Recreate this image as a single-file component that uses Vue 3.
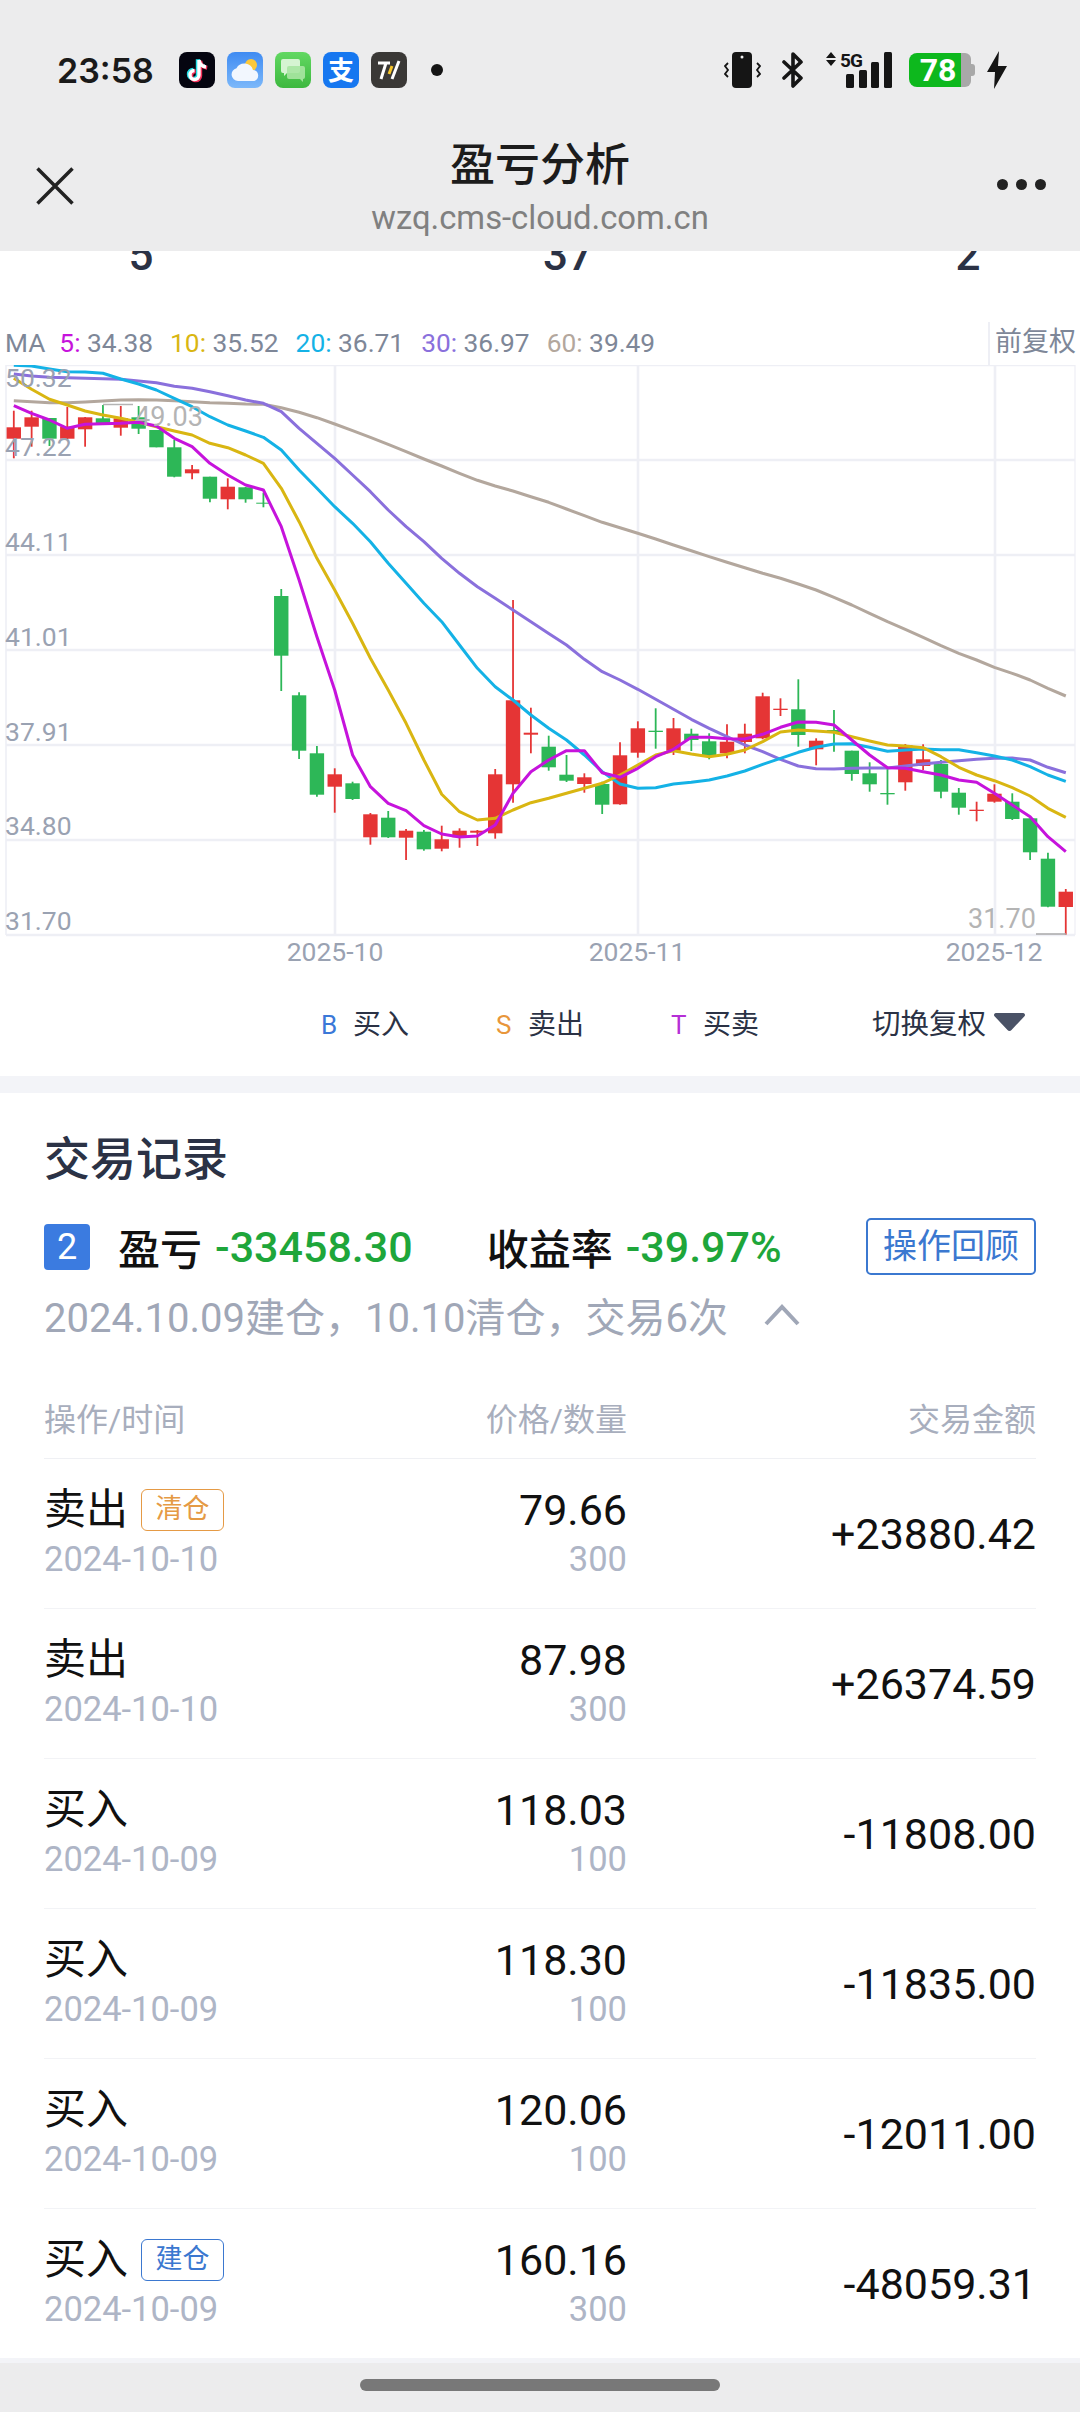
<script setup>
// candle: [colour, wick top, body top, body bottom, wick bottom], y in chart pixels
const R = '#e53535'
const G = '#2db757'
const candles = [
  [R,410.7,427.3,438.7,458.3],[R,410.7,417.3,426.7,446.7],[G,418,418,438.7,446],[R,407,426.7,438.7,439],
  [R,417,417.3,429.3,446.7],[G,405,418.3,425,425],[R,406,418.3,427.7,435.7],[G,406,417.3,428.7,434],
  [G,430,430,447.3,447.3],[G,440,447.3,476.7,477.3],[R,465,469.3,473.3,479.3],[G,476.7,476.7,498.7,502.3],
  [R,478.3,486.7,499.3,509.3],[G,487,487.3,499.3,502.7],[G,492.7,502.7,503.7,507.3],[G,589,596,655.7,691],
  [G,692.3,695.3,750.7,759],[G,746,753.3,794.7,796.7],[R,768.3,774.3,786.7,812.7],[G,781.7,783.3,799,800],
  [R,813,814.3,837.3,844.7],[G,811,817.7,837.3,838],[R,829,830.7,837.7,860],[G,830,831.7,849.3,850.7],
  [R,825.7,839.3,848.7,851.3],[R,828.3,830.7,837.3,847.7],[R,830,830.7,832.7,846],[R,769,774.3,833.3,838.7],
  [R,600,700.3,784.3,802.7],[R,707.7,732.7,734.7,753.3],[G,735.7,746.7,767.3,770.7],[G,755,774.7,780.7,782],
  [R,773.3,777.3,784,792.7],[G,781.7,784,804.7,814],[R,742.3,755.3,804.3,804.7],[R,721.3,728.3,752.7,757.7],
  [G,708.3,730.7,732,748.7],[R,718,728.3,750.7,755],[G,728.7,733.7,740,751],[G,733.3,741.3,756.7,759.3],
  [R,724.3,741.7,753.3,758.3],[R,723.7,733.7,742,753.3],[R,692.7,696.3,738.3,739.3],[R,698.3,708.7,710,716],
  [G,679.3,709.3,735,746.7],[R,738.3,740.7,749.3,765.3],[G,710,730,732,751.7],[G,750.7,750.7,774,780.7],
  [G,762.3,773.3,784.3,791.7],[G,768.3,793,794.3,804.7],[R,744,745.3,782.3,790.7],[R,744.3,759.3,766,770],
  [G,760,764,791.7,798.3],[G,788,792.7,807.7,814.7],[R,801.7,809.7,811,821.3],[R,784.3,793.7,801.7,802.7],
  [G,793.3,801.7,819,820],[G,818.3,818.3,852.3,860],[G,852.7,858.7,906.7,907.3],[R,889,891.7,907,934.7]
]

const ma5 = [405.7,413.3,420,428.3,424.3,423.7,423.3,422.3,426,438.3,446.7,463.3,475,485,490,526.7,580,636.7,690,755,786.7,803.3,810.7,825.7,834,837,836,825,793.3,771.7,760,750.7,750.7,772.7,777.3,768.3,756.7,749.3,737.3,737.3,738.7,739,734.3,727.3,722,722.3,725,740,755,767.7,768.3,771.7,775,780,782.3,793.3,805,816.7,836.7,851.7]
const ma10 = [378.3,389.3,399.3,405,411,415,418.3,422.3,426.7,431,435,443.3,447.7,455,463.3,488.3,521.7,558.3,590,623.3,658.3,690,723.3,760,794.3,811.7,820,818.3,810,802.7,798.3,793.3,788.3,783.3,775,765,755,750.7,754,756.7,754.3,750,741.7,732,730,731,732.3,736.7,741,745,746,747.7,756.7,767.3,775,780.7,787.7,796,808.3,817.3]
const ma20 = [365.3,366,369,371.7,372,373.3,379,384,390,398.3,406.7,416.7,425,431,437.3,450,470,488.3,506.7,523.3,541.7,563.3,583.3,603.3,621.7,645,668.3,686.7,700,715,728.3,740,755,771.7,784,788.3,787.7,784,782.3,780,776,771,764.3,758.3,752.3,747.3,744,743.7,747.3,751.3,750,749,749.7,749.7,752.7,756,760,766.7,775,781.3]
const ma30 = [374,376,377.3,377.7,378.3,378.7,379.3,381,382.7,386.3,388.3,391.7,395.7,400,403.3,411.7,428.3,443.3,458.3,475,491.7,510,526.7,541.7,558.3,573.3,586.7,598.3,610,621.7,633.5,645,659.3,671.7,680,689.3,699.3,709.3,719.3,728.3,736.7,745,751.7,759.3,766,768.7,769,768.3,768,768,766,764,762.3,760.7,759.3,758.3,758,760,767.3,772.7]
const ma60 = [400.7,401.7,402.7,402.7,402,401,400,399.7,400,400.7,401.7,402.7,403.3,404,404.3,407.7,412.3,417.7,424,430.7,437.3,444.3,451.7,459,466,473.3,480.3,486,491,496.7,502.3,509,515.7,522.3,527.7,533.3,539,545,550.7,556.7,562.3,567.7,573.3,578.3,584,590,597.3,605,613.3,621.7,629.3,637.3,645.7,653.3,660,667.3,673.3,680,688.3,696]

const xAt = (i) => 13.8 + 17.83 * i
const toPoints = (ys) => ys.map((y, i) => `${xAt(i).toFixed(1)},${y}`).join(' ')

const maLines = [
  { color: '#b3a79d', points: toPoints(ma60) },
  { color: '#8a70dc', points: toPoints(ma30) },
  { color: '#14b2e6', points: toPoints(ma20) },
  { color: '#d9b612', points: toPoints(ma10) },
  { color: '#c613dc', points: toPoints(ma5) }
]

const maLegend = [
  { label: '5:', value: '34.38', color: '#c613dc' },
  { label: '10:', value: '35.52', color: '#d9b612' },
  { label: '20:', value: '36.71', color: '#14b2e6' },
  { label: '30:', value: '36.97', color: '#8a70dc' },
  { label: '60:', value: '39.49', color: '#b3a79d' }
]

const gridY = [365, 460, 555, 650, 745, 840, 935]
const gridX = [335, 638, 995]
const priceLabels = [
  { text: '50.32', y: 387 }, { text: '47.22', y: 456 }, { text: '44.11', y: 551 }, { text: '41.01', y: 646 },
  { text: '37.91', y: 741 }, { text: '34.80', y: 835 }, { text: '31.70', y: 930 }
]
const dateLabels = [{ text: '2025-10', x: 335 }, { text: '2025-11', x: 637 }, { text: '2025-12', x: 994 }]

const marks = [
  { key: 'B', label: '买入', color: '#3b78d8' },
  { key: 'S', label: '卖出', color: '#e8963a' },
  { key: 'T', label: '买卖', color: '#b52fd6' }
]

const trades = [
  { side: '卖出', tag: '清仓', tagType: 'tag-close', date: '2024-10-10', price: '79.66', qty: '300', amount: '+23880.42' },
  { side: '卖出', date: '2024-10-10', price: '87.98', qty: '300', amount: '+26374.59' },
  { side: '买入', date: '2024-10-09', price: '118.03', qty: '100', amount: '-11808.00' },
  { side: '买入', date: '2024-10-09', price: '118.30', qty: '100', amount: '-11835.00' },
  { side: '买入', date: '2024-10-09', price: '120.06', qty: '100', amount: '-12011.00' },
  { side: '买入', tag: '建仓', tagType: 'tag-open', date: '2024-10-09', price: '160.16', qty: '300', amount: '-48059.31' }
]
</script>

<template>
  <div class="page">
    <header class="top">
      <div class="status">
        <span class="time">23:58</span>
        <div class="apps">
          <svg class="app" viewBox="0 0 36 36">
            <rect width="36" height="36" rx="8" fill="#050510" />
            <path d="M20 8v15a4.5 4.5 0 1 1-4.5-4.5M20 8c.5 4 3 6.5 7 7" fill="none" stroke="#25e0e8" stroke-width="4" transform="translate(-1.2 -0.8)" />
            <path d="M20 8v15a4.5 4.5 0 1 1-4.5-4.5M20 8c.5 4 3 6.5 7 7" fill="none" stroke="#f5305a" stroke-width="4" transform="translate(1.2 0.8)" />
            <path d="M20 8v15a4.5 4.5 0 1 1-4.5-4.5M20 8c.5 4 3 6.5 7 7" fill="none" stroke="#fff" stroke-width="3.4" />
          </svg>
          <svg class="app" viewBox="0 0 36 36">
            <defs>
              <linearGradient id="skyFill" x1="0" y1="0" x2="0" y2="1"><stop offset="0" stop-color="#3f8bf2" /><stop offset="1" stop-color="#7cb8fa" /></linearGradient>
            </defs>
            <rect width="36" height="36" rx="8" fill="url(#skyFill)" />
            <circle cx="24" cy="13" r="6" fill="#fcc83a" />
            <path d="M11 29a6.500 6.500 0 0 1-1.500-12.800A9 9 0 0 1 26 18a5.600 5.600 0 0 1 1 11z" fill="#f2f7fe" />
          </svg>
          <svg class="app" viewBox="0 0 36 36">
            <defs>
              <linearGradient id="msgFill" x1="0" y1="0" x2="0" y2="1"><stop offset="0" stop-color="#62d862" /><stop offset="1" stop-color="#3db83f" /></linearGradient>
            </defs>
            <rect width="36" height="36" rx="8" fill="url(#msgFill)" />
            <path d="M8 7h15a2 2 0 0 1 2 2v10a2 2 0 0 1-2 2H12l-3 3v-3H8a2 2 0 0 1-2-2V9a2 2 0 0 1 2-2z" fill="#d6f4d2" />
            <path d="M14 14h14a2 2 0 0 1 2 2v9a2 2 0 0 1-2 2v3l-3-3H14a2 2 0 0 1-2-2v-9a2 2 0 0 1 2-2z" fill="#a8e5a2" opacity=".9" />
          </svg>
          <svg class="app" viewBox="0 0 36 36">
            <rect width="36" height="36" rx="8" fill="#1677f0" />
            <text x="18" y="28" text-anchor="middle" class="app-glyph">支</text>
          </svg>
          <svg class="app" viewBox="0 0 36 36">
            <rect width="36" height="36" rx="8" fill="#3a3836" />
            <path d="M7 11h12M15 11l-5 16" fill="none" stroke="#fff" stroke-width="3" />
            <path d="M21 14l-3 8" fill="none" stroke="#f6c428" stroke-width="3" />
            <path d="M28 9l-7 18" fill="none" stroke="#fff" stroke-width="3" />
          </svg>
        </div>
        <span class="dot"></span>

        <div class="sys">
          <svg width="37" height="36" viewBox="0 0 37 36">
            <rect x="8" y="0" width="20" height="36" rx="4" fill="#151515" />
            <circle cx="18" cy="5" r="1.500" fill="#eee" />
            <path d="M4 11l-3 3 3 4-3 4 3 3M33 11l3 3-3 4 3 4-3 3" fill="none" stroke="#151515" stroke-width="1.800" />
          </svg>
          <svg class="sys-bt" width="22" height="36" viewBox="0 0 22 36">
            <path d="M2 10l17 16-8 8V2l8 8L2 26" fill="none" stroke="#151515" stroke-width="3.600" stroke-linejoin="round" stroke-linecap="round" />
          </svg>
          <svg class="sys-signal" width="68" height="36" viewBox="0 0 68 36">
            <path d="M6 0l5 6H1zM6 14l5-6H1z" fill="#151515" />
            <text x="15" y="15" class="net">5G</text>
            <rect x="21" y="22" width="8" height="14" rx="1.500" fill="#151515" />
            <rect x="34" y="18" width="8" height="18" rx="1.500" fill="#151515" />
            <rect x="46" y="10" width="8" height="26" rx="1.500" fill="#151515" />
            <rect x="59" y="0" width="8" height="36" rx="1.500" fill="#151515" />
          </svg>
          <svg class="sys-battery" width="66" height="34" viewBox="0 0 66 34">
            <path d="M58 11h5a3 3 0 0 1 3 3v6a3 3 0 0 1-3 3h-5z" fill="#a8a8a8" />
            <path d="M52 0h4a6 6 0 0 1 6 6v22a6 6 0 0 1-6 6h-4z" fill="#a8a8a8" />
            <path d="M8 0h44v34H8a8 8 0 0 1-8-8V8a8 8 0 0 1 8-8z" fill="#0db81d" />
            <text x="29" y="28" text-anchor="middle" class="bat">78</text>
          </svg>
          <svg class="sys-bolt" width="20" height="38" viewBox="0 0 20 38">
            <path d="M12 0L0 21h8l-1 17L20 15h-9z" fill="#151515" />
          </svg>
        </div>
      </div>

      <div class="nav">
        <svg class="close-icon" width="38" height="38" viewBox="0 0 38 38">
          <path d="M1.500 1.500l35 35M36.500 1.500l-35 35" fill="none" stroke="#222" stroke-width="3.500" />
        </svg>
        <div class="nav-title">
          <div class="title">盈亏分析</div>
          <div class="domain">wzq.cms-cloud.com.cn</div>
        </div>
        <div class="more"><i></i><i></i><i></i></div>
      </div>
    </header>

    <main>
      <div class="stats">
        <span>5</span>
        <span>37</span>
        <span>2</span>
      </div>

      <div class="ma-row">
        <span class="ma-name">MA</span>
        <span v-for="m in maLegend" :key="m.label" class="ma-item">
          <span :style="{ color: m.color }">{{ m.label }}</span> {{ m.value }}
        </span>
        <span class="fq">前复权</span>
      </div>

      <svg class="chart" width="1080" height="610" viewBox="0 365 1080 610">
        <line v-for="y in gridY" :key="'h' + y" x1="6" x2="1075" :y1="y" :y2="y" stroke="#eeeff5" stroke-width="2.600" />
        <line v-for="x in gridX" :key="'v' + x" :x1="x" :x2="x" y1="365" y2="935" stroke="#eeeff5" stroke-width="2.600" />
        <line x1="6" x2="6" y1="365" y2="935" stroke="#eeeff5" stroke-width="1.600" />
        <line x1="1075" x2="1075" y1="365" y2="935" stroke="#eeeff5" stroke-width="1.200" />

        <g v-for="(c, i) in candles" :key="i">
          <line :x1="xAt(i)" :x2="xAt(i)" :y1="c[1]" :y2="c[4]" :stroke="c[0]" stroke-width="1.800" />
          <rect :x="xAt(i) - 7.2" :y="c[2]" width="14.400" :height="c[3] - c[2]" :fill="c[0]" />
        </g>

        <polyline
          v-for="line in maLines"
          :key="line.color"
          :points="line.points"
          fill="none"
          :stroke="line.color"
          stroke-width="3"
          stroke-linejoin="round"
        />

        <text v-for="p in priceLabels" :key="p.text" x="5" :y="p.y" class="axis">{{ p.text }}</text>
        <text v-for="d in dateLabels" :key="d.text" :x="d.x" y="961" text-anchor="middle" class="axis">{{ d.text }}</text>

        <line x1="103" x2="133" y1="404.500" y2="404.500" stroke="#b4b4b4" stroke-width="1.500" />
        <text x="135" y="426" class="extreme">49.03</text>
        <line x1="1036" x2="1066" y1="934" y2="934" stroke="#a8a8a8" stroke-width="1.500" />
        <text x="968" y="928" class="extreme">31.70</text>
      </svg>

      <div class="legend">
        <span v-for="m in marks" :key="m.key" class="legend-item">
          <b :style="{ color: m.color }">{{ m.key }}</b>{{ m.label }}
        </span>
        <span class="switch">
          切换复权
          <svg width="33" height="20" viewBox="0 0 33 20"><path d="M3 1h27a2 2 0 0 1 1.700 3L18.500 18a2.500 2.500 0 0 1-4 0L1.300 4A2 2 0 0 1 3 1z" fill="#4a5266" /></svg>
        </span>
      </div>

      <div class="gap"></div>

      <section class="records">
        <h2>交易记录</h2>
        <div class="summary">
          <span class="badge">2</span>
          <span class="s-label">盈亏</span>
          <span class="s-value">-33458.30</span>
          <span class="s-label s-second">收益率</span>
          <span class="s-value">-39.97%</span>
          <span class="review">操作回顾</span>
        </div>
        <div class="period">
          2024.10.09建仓，10.10清仓，交易6次
          <svg width="36" height="22" viewBox="0 0 36 22"><path d="M2 20L18 3l16 17" fill="none" stroke="#a0a7b7" stroke-width="4" /></svg>
        </div>

        <div class="thead">
          <span>操作/时间</span>
          <span class="right">价格/数量</span>
          <span class="right">交易金额</span>
        </div>
        <div v-for="(t, i) in trades" :key="i" class="trow">
          <div>
            <div class="side">
              {{ t.side }}
              <span v-if="t.tag" class="tag" :class="t.tagType">{{ t.tag }}</span>
            </div>
            <div class="sub">{{ t.date }}</div>
          </div>
          <div class="right">
            <div class="price">{{ t.price }}</div>
            <div class="sub">{{ t.qty }}</div>
          </div>
          <div class="right amount">{{ t.amount }}</div>
        </div>
      </section>
    </main>

    <footer class="home"><span class="pill"></span></footer>
  </div>
</template>

<style scoped>
.page {
  width: 1080px;
  height: 2412px;
  overflow: hidden;
  display: flex;
  flex-direction: column;
  font-family: Roboto, "Noto Sans CJK SC", sans-serif;
  background: #fff;
}

.top {
  height: 251px;
  background: #ececed;
  flex-shrink: 0;
}

.status {
  height: 140px;
  display: flex;
  align-items: center;
  padding-left: 57px;
}

.time {
  font-family: Inter, sans-serif;
  font-size: 34px;
  font-weight: 600;
  color: #1a1a1a;
  width: 122px;
}

.apps {
  display: flex;
  gap: 12px;
}

.app {
  width: 36px;
  height: 36px;
  display: block;
}

.app-glyph {
  font-family: "Noto Sans CJK SC", sans-serif;
  font-size: 26px;
  font-weight: 700;
  fill: #fff;
}

.dot {
  width: 12px;
  height: 12px;
  border-radius: 50%;
  background: #151515;
  margin-left: 24px;
}

.sys {
  margin-left: auto;
  margin-right: 73px;
  display: flex;
  align-items: center;
}

.sys svg {
  display: block;
}

.sys-bt {
  margin-left: 21px;
}

.sys-signal {
  margin-left: 21px;
}

.sys-battery {
  margin-left: 16px;
}

.sys-bolt {
  margin-left: 12px;
}

.net {
  font-family: Roboto, sans-serif;
  font-size: 19px;
  font-weight: 700;
  fill: #151515;
  letter-spacing: -1px;
}

.bat {
  font-family: Roboto, sans-serif;
  font-size: 32px;
  font-weight: 700;
  fill: #fff;
}

.nav {
  height: 111px;
  display: grid;
  grid-template-columns: 1fr auto 1fr;
  padding: 0 36px;
}

.close-icon {
  margin-top: 27px;
  display: block;
}

.nav-title {
  text-align: center;
}

.title {
  font-size: 45px;
  line-height: 52px;
  font-weight: 500;
  color: #1c1c1c;
}

.domain {
  font-size: 32.8px;
  line-height: 52px;
  color: #808080;
}

.more {
  justify-self: end;
  display: flex;
  gap: 8px;
  margin-top: 39px;
  margin-right: -2px;
  height: 12px;
}

.more i {
  width: 11px;
  height: 11px;
  border-radius: 50%;
  background: #222;
}

.stats {
  height: 49px;
  overflow: hidden;
  display: grid;
  grid-template-columns: 282px 572px 228px;
  text-align: center;
  font-size: 44px;
  line-height: 40px;
  font-weight: 500;
  color: #2b3245;
}

.stats span {
  margin-top: -16px;
}

.ma-row {
  height: 65px;
  display: flex;
  align-items: center;
  padding: 20px 0 0 5px;
  box-sizing: border-box;
  font-size: 26.3px;
  color: #7e8798;
}

.ma-name {
  margin-right: 14px;
}

.ma-item {
  margin-right: 17px;
  white-space: pre;
}

.fq {
  margin-left: auto;
  align-self: flex-end;
  height: 43px;
  padding: 0 4px 0 5px;
  line-height: 40px;
  font-size: 27px;
  box-sizing: border-box;
  border-left: 2px solid #eeeff5;
}

.chart {
  display: block;
  flex-shrink: 0;
}

.axis {
  font-family: Roboto, sans-serif;
  font-size: 26.5px;
  fill: #9aa2b2;
}

.extreme {
  font-family: Roboto, sans-serif;
  font-size: 27px;
  fill: #b4b4b4;
}

.legend {
  height: 101px;
  padding: 0 0 8px 321px;
  box-sizing: border-box;
  display: flex;
  align-items: center;
  font-size: 28px;
  color: #2b3245;
  flex-shrink: 0;
}

.legend-item {
  width: 175px;
}

.legend-item b {
  font-weight: 400;
  font-size: 26px;
  display: inline-block;
  width: 32px;
}

.switch {
  margin-left: 26px;
  display: flex;
  align-items: center;
  gap: 7px;
  font-size: 28.5px;
}

.gap {
  height: 17px;
  background: #f3f4f8;
  flex-shrink: 0;
}

.records {
  padding: 0 44px;
  height: 1265px;
  flex-shrink: 0;
  color: #111;
}

h2 {
  margin: 0;
  padding-top: 40px;
  font-size: 46px;
  line-height: 52px;
  font-weight: 500;
  color: #2b3245;
}

.summary {
  margin-top: 33px;
  height: 57px;
  display: flex;
  align-items: center;
  font-size: 42px;
}

.badge {
  width: 46px;
  height: 46px;
  border-radius: 4px;
  background: #3b7be0;
  color: #fff;
  font-size: 36px;
  line-height: 46px;
  text-align: center;
  margin-right: 28px;
}

.s-label {
  font-weight: 500;
  color: #111;
}

.s-value {
  color: #1ea63a;
  font-size: 43px;
  font-weight: 500;
  margin-left: 13px;
}

.s-second {
  margin-left: 74px;
}

.review {
  margin-left: auto;
  width: 170px;
  height: 57px;
  box-sizing: border-box;
  border: 2px solid #3b78d0;
  border-radius: 5px;
  color: #3b78d0;
  font-size: 34px;
  line-height: 52px;
  text-align: center;
}

.period {
  margin-top: 12px;
  height: 56px;
  display: flex;
  align-items: center;
  gap: 36px;
  font-size: 40px;
  color: #a0a7b7;
}

.thead {
  margin-top: 40px;
  height: 76px;
  padding-bottom: 8px;
  box-sizing: border-box;
  display: grid;
  grid-template-columns: 300px 283px 1fr;
  align-items: center;
  font-size: 32px;
  color: #a8aebd;
  border-bottom: 1px solid #eff0f4;
}

.trow {
  height: 150px;
  box-sizing: border-box;
  display: grid;
  grid-template-columns: 300px 283px 1fr;
  align-items: center;
  border-bottom: 1px solid #f2f3f6;
}

.trow:last-child {
  border-bottom: 0;
}

.right {
  text-align: right;
}

.side {
  display: flex;
  align-items: center;
  gap: 13px;
  font-size: 42px;
  line-height: 50px;
  color: #111;
}

.tag {
  width: 83px;
  height: 42px;
  box-sizing: border-box;
  border: 1px solid;
  border-radius: 6px;
  font-size: 27px;
  line-height: 38px;
  text-align: center;
}

.tag-open {
  color: #3b78d0;
  border-color: #3b78d0;
}

.tag-close {
  color: #e59a45;
  border-color: #e59a45;
}

.sub {
  font-size: 34.5px;
  line-height: 48px;
  color: #aeb5c6;
}

.price {
  font-size: 43px;
  line-height: 50px;
  color: #111;
}

.amount {
  font-size: 43px;
  color: #111;
}

.home {
  height: 54px;
  background: #ececed;
  border-top: 5px solid #f3f4f8;
  box-sizing: border-box;
  display: flex;
  justify-content: center;
  padding-top: 16px;
}

.pill {
  width: 360px;
  height: 12px;
  border-radius: 6px;
  background: #787878;
}
</style>

<style>
html, body {
  margin: 0;
  background: #fff;
}
</style>
